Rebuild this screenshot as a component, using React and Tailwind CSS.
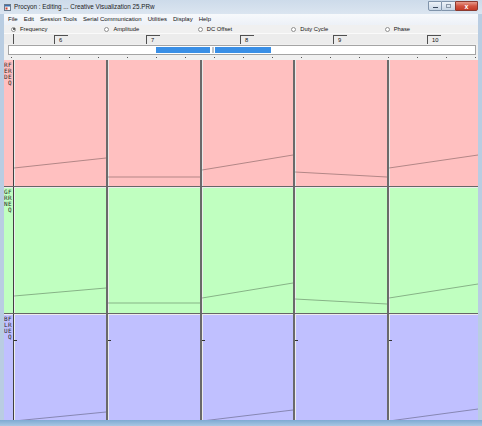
import React from "react";

const menus = ["File", "Edit", "Session Tools", "Serial Communication", "Utilities", "Display", "Help"];
const modes = ["Frequency", "Amplitude", "DC Offset", "Duty Cycle", "Phase"];
const marks = ["6", "7", "8", "9", "10"];
const cols = "grid grid-cols-[9px_93px_94px_93px_94px_1fr]";

const rows = [
  {
    bg: "bg-[#ffc0c0]",
    name: "RED",
    h: "h-[126px]",
    lines: [[108, 98], [117, 117], [110, 95], [112, 117], [108, 95]],
  },
  {
    bg: "bg-[#c0ffc0]",
    name: "GRN",
    h: "h-[127px]",
    lines: [[109, 101], [116, 116], [111, 96], [112, 117], [111, 97]],
  },
  {
    bg: "bg-[#c0c0ff]",
    name: "BLU",
    h: "h-[127px]",
    lines: [[107, 98], [116, 116], [107, 96], [112, 117], [107, 95]],
    ticks: true,
  },
];

const Letters = ({ text }) => (
  <div className="flex flex-col w-[4px]">
    {text.split("").map((c, i) => (
      <span key={i} className="h-[6px] leading-[6px]">
        {c}
      </span>
    ))}
  </div>
);

const Radio = ({ checked }) => (
  <span className="w-[5px] h-[5px] rounded-full border border-[#909090] bg-white flex items-center justify-center">
    {checked && <span className="w-[2px] h-[2px] rounded-full bg-[#333]" />}
  </span>
);

const ChartRow = ({ row, first }) => (
  <div className={`${cols} ${row.h} ${row.bg} ${first ? "" : "border-t border-[#666]"}`}>
    <div
      className={`flex pt-[2px] text-[6px] text-[#2a2a2a] font-['DejaVu_Sans_Mono',monospace] ${
        first ? "" : "shadow-[inset_0_1px_0_#ececec]"
      }`}
    >
      <Letters text={row.name} />
      <Letters text="FREQ" />
    </div>
    {row.lines.map(([y1, y2], i) => (
      <div
        key={i}
        className={`${i === 0 ? "border-l border-[#404040]" : "border-l-2 border-[#6a6a6a]"} ${
          first ? "shadow-[inset_1px_0_0_#e8e8e8]" : "shadow-[inset_1px_1px_0_#ececec]"
        } overflow-hidden`}
      >
        <svg width="100%" height="100%" className="block">
          <line x1="0" y1={y1} x2="100%" y2={y2} stroke="#000" strokeOpacity="0.3" strokeWidth="1" />
          {row.ticks && <line x1="0" y1="26.5" x2="3" y2="26.5" stroke="#333" strokeWidth="1" />}
        </svg>
      </div>
    ))}
  </div>
);

export default function App() {
  return (
    <div className="w-[482px] h-[426px] flex flex-col overflow-hidden bg-[#b9cde2] font-['Liberation_Sans',Arial,sans-serif] text-[6px] text-[#111]">
      {/* title bar */}
      <div className="h-[14px] flex items-start justify-between bg-gradient-to-b from-[#cddbea] to-[#dbe5f0]">
        <div className="flex items-center h-[14px] pl-[4px] gap-[3px]">
          <svg width="7" height="7" viewBox="0 0 7 7">
            <rect x="0.5" y="0.5" width="6" height="6" fill="#f4f4f4" stroke="#6a7a8c" />
            <rect x="1" y="1" width="5" height="1.5" fill="#3b6fb0" />
            <rect x="1.5" y="3.5" width="2" height="2" fill="#d04030" />
          </svg>
          <span className="text-[6.3px] text-[#1b1b1b]">Procyon : Editing ... Creative Visualization 25.PRw</span>
        </div>
        <div className="flex pr-[4px] pt-[1px]">
          <div className="w-[14px] h-[10px] rounded-bl-[2px] border border-[#8094ab] bg-gradient-to-b from-[#eef3f8] to-[#c8d6e5] flex items-end justify-center pb-[2px]">
            <span className="w-[5px] h-[1.5px] bg-[#3a4a5e]" />
          </div>
          <div className="w-[13px] h-[10px] border-y border-[#8094ab] bg-gradient-to-b from-[#eef3f8] to-[#c8d6e5] flex items-center justify-center">
            <span className="w-[5px] h-[4px] border border-[#8a98a8]" />
          </div>
          <div className="w-[23px] h-[10px] rounded-br-[2px] border border-[#8a3a30] bg-gradient-to-b from-[#e59a8c] via-[#d25440] to-[#c23a26] flex items-center justify-center text-white text-[7px] font-bold leading-none">
            x
          </div>
        </div>
      </div>

      {/* client */}
      <div className="mx-[4px] h-[406px] flex flex-col bg-[#f0f0f0] overflow-hidden">
        {/* menu bar */}
        <div className="h-[11px] flex items-center gap-[6px] pl-[4px] bg-gradient-to-b from-[#f7f9fc] to-[#edf1f7]">
          {menus.map((m) => (
            <span key={m}>{m}</span>
          ))}
        </div>

        {/* radio row */}
        <div className="h-[8px] flex pl-[7px] text-[5.8px]">
          {modes.map((m, i) => (
            <div key={m} className="w-[94px] flex items-center gap-[4px]">
              <Radio checked={i === 0} />
              <span>{m}</span>
            </div>
          ))}
        </div>

        {/* ruler */}
        <div className={`${cols} h-[11px] bg-[#ececec] border-t border-[#fafafa]`}>
          <div />
          {marks.map((m, i) => (
            <div key={m} className={`${i === 0 ? "border-l border-[#505050]" : ""} pt-[1px]`}>
              <div className="ml-[40px] w-[14px] h-[9px] border-l border-t border-[#505050] pl-[4px] text-[5.8px] leading-[8px]">
                {m}
              </div>
            </div>
          ))}
        </div>

        {/* scroller */}
        <div className="h-[11px] pl-[4px] pr-[2px] pt-[1px]">
          <div className="h-[10px] border border-[#a4a4a4] bg-white p-[1px] flex">
            <div className="w-[146px]" />
            <div className="w-[54px] bg-[#3a8fe6]" />
            <div className="w-[5px] flex justify-center">
              <span className="w-[2px] h-full bg-[#c0c4c8]" />
            </div>
            <div className="w-[56px] bg-[#3a8fe6]" />
          </div>
        </div>

        {/* tick dots */}
        <div className="h-[5px] flex pl-[7px] items-center">
          {Array.from({ length: 17 }).map((_, i) => (
            <div key={i} className="w-[29px] shrink-0">
              <span className="block w-[1px] h-[1.5px] bg-[#555]" />
            </div>
          ))}
        </div>

        {/* chart grid */}
        <div className="h-[360px] overflow-hidden">
          {rows.map((r, i) => (
            <ChartRow key={r.name} row={r} first={i === 0} />
          ))}
        </div>
      </div>

      {/* bottom frame */}
      <div className="h-[6px] bg-gradient-to-b from-[#7eaad2] to-[#a9c7e3]" />
    </div>
  );
}
